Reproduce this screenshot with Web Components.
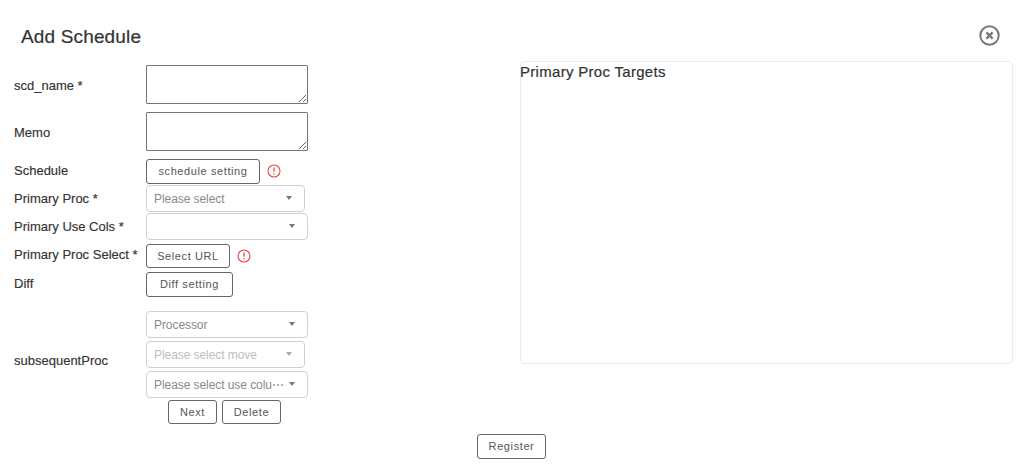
<!DOCTYPE html>
<html lang="en">
<head>
<meta charset="utf-8">
<title>Add Schedule</title>
<style>
  html, body { margin: 0; height: 100%; background: #fff; }
  body { font-family: 'Liberation Sans', Arial, sans-serif; color: #333; }
</style>
</head>
<body>
<schedule-modal>
  <span slot="title">Add Schedule</span>

  <form-row slot="form" label="scd_name *" label-offset="-2"><text-box></text-box></form-row>
  <form-row slot="form" label="Memo" label-offset="-2" style="margin-top:8px"><text-box></text-box></form-row>
  <form-row slot="form" label="Schedule" style="margin-top:8px">
    <ui-button width="114">schedule setting</ui-button><alert-icon></alert-icon>
  </form-row>
  <form-row slot="form" label="Primary Proc *" label-offset="0" style="margin-top:1px">
    <ui-select width="159">Please select</ui-select>
  </form-row>
  <form-row slot="form" label="Primary Use Cols *" label-offset="0" style="margin-top:1px">
    <ui-select width="162"></ui-select>
  </form-row>
  <form-row slot="form" label="Primary Proc Select *" style="margin-top:4px">
    <ui-button width="84">Select URL</ui-button><alert-icon></alert-icon>
  </form-row>
  <form-row slot="form" label="Diff" style="margin-top:4px">
    <ui-button width="87">Diff setting</ui-button>
  </form-row>
  <form-row slot="form" label="subsequentProc" label-offset="13" style="margin-top:14px">
    <proc-group>
      <ui-select width="162">Processor</ui-select>
      <ui-select width="159" disabled style="margin-top:3px">Please select move</ui-select>
      <ui-select width="162" style="margin-top:3px">Please select use colu⋯</ui-select>
      <ui-button slot="actions" width="49">Next</ui-button>
      <ui-button slot="actions" width="59">Delete</ui-button>
    </proc-group>
  </form-row>

  <targets-panel slot="side">Primary Proc Targets</targets-panel>
  <ui-button slot="footer" width="69">Register</ui-button>
</schedule-modal>

<script>
const sheet = (css, html) => `<style>${css}</style>${html}`;

class ScheduleModal extends HTMLElement {
  constructor() {
    super();
    this.attachShadow({ mode: 'open' });
    this.shadowRoot.innerHTML = sheet(`
      :host { display: flex; flex-direction: column; width: 1024px; height: 469px; box-sizing: border-box; }
      header { display: flex; justify-content: space-between; align-items: center; height: 61px; padding: 10px 24px 0 21px; box-sizing: border-box; }
      h1 { margin: 0; padding-top: 3px; font-size: 19px; font-weight: 500; color: #333; letter-spacing: 0.15px; -webkit-text-stroke: 0.2px #333; }
      .body { display: flex; justify-content: space-between; padding: 0 11px 0 14px; }
      .form { width: 300px; padding-top: 4px; }
      footer { display: flex; justify-content: center; margin-top: 10px; padding-right: 1px; }
      svg { display: block; }
    `, `
      <header>
        <h1><slot name="title"></slot></h1>
        <svg width="21" height="21" viewBox="0 0 21 21" fill="none" stroke="#777" aria-label="Close">
          <circle cx="10.5" cy="10.5" r="9.2" stroke-width="2"/>
          <path d="M7.4 7.4l6.2 6.2M13.6 7.4l-6.2 6.2" stroke-width="2.3"/>
        </svg>
      </header>
      <div class="body">
        <div class="form"><slot name="form"></slot></div>
        <slot name="side"></slot>
      </div>
      <footer><slot name="footer"></slot></footer>
    `);
  }
}

class FormRow extends HTMLElement {
  constructor() {
    super();
    this.attachShadow({ mode: 'open' });
    this.shadowRoot.innerHTML = sheet(`
      :host { display: flex; align-items: center; font-size: 13px; }
      label { flex: 0 0 132px; color: #333; white-space: nowrap; box-sizing: border-box; line-height: 15px; -webkit-text-stroke: 0.15px #333; }
      .ctl { display: flex; align-items: center; }
    `, `<label></label><div class="ctl"><slot></slot></div>`);
  }
  connectedCallback() {
    const label = this.shadowRoot.querySelector('label');
    label.textContent = this.getAttribute('label');
    // shifts the label off the vertical centre of the control
    const off = Number(this.getAttribute('label-offset') ?? 2);
    if (off >= 0) label.style.paddingBottom = off + 'px';
    else label.style.paddingTop = -off + 'px';
  }
}

class TextBox extends HTMLElement {
  constructor() {
    super();
    this.attachShadow({ mode: 'open' });
    this.shadowRoot.innerHTML = sheet(`
      :host { display: block; }
      textarea { display: block; width: 162px; height: 39px; box-sizing: border-box; margin: 0; border: 1px solid #767676; border-radius: 1px; background: #fff; }
    `, `<textarea></textarea>`);
  }
}

class UiButton extends HTMLElement {
  constructor() {
    super();
    this.attachShadow({ mode: 'open' });
    this.shadowRoot.innerHTML = sheet(`
      :host { display: inline-block; vertical-align: top; }
      button { display: block; width: 100%; height: 24.5px; padding: 0; margin: 0; box-sizing: border-box; border: 1px solid #666; border-radius: 3px; background: #fff; color: #555; font: 11px 'Liberation Sans', Arial, sans-serif; letter-spacing: 0.6px; white-space: nowrap; }
    `, `<button type="button"><slot></slot></button>`);
  }
  connectedCallback() {
    this.style.width = this.getAttribute('width') + 'px';
  }
}

class UiSelect extends HTMLElement {
  constructor() {
    super();
    this.attachShadow({ mode: 'open' });
    this.shadowRoot.innerHTML = sheet(`
      :host { display: flex; align-items: center; height: 27px; box-sizing: border-box; padding: 0 12px 0 7px; border: 1px solid #d0d0d0; border-radius: 4px; background: #fff; font-size: 12px; color: #8a8a8a; letter-spacing: -0.07px; }
      :host([disabled]) { color: #bdbdbd; }
      .text { flex: 1; padding-top: 1px; white-space: nowrap; overflow: hidden; }
      .arrow { flex: none; width: 0; height: 0; margin-left: 5px; border: 3.5px solid transparent; border-top: 4px solid #777; border-bottom: 0; }
      :host([disabled]) .arrow { border-top-color: #aaa; }
    `, `<span class="text"><slot></slot></span><span class="arrow"></span>`);
  }
  connectedCallback() {
    this.style.width = this.getAttribute('width') + 'px';
  }
}

class AlertIcon extends HTMLElement {
  constructor() {
    super();
    this.attachShadow({ mode: 'open' });
    this.shadowRoot.innerHTML = sheet(`
      :host { display: block; margin-left: 7px; }
      svg { display: block; }
    `, `<svg width="14" height="14" viewBox="0 0 14 14" fill="none" stroke="#ee4540">
      <circle cx="7" cy="7" r="6" stroke-width="1.1"/>
      <path d="M7 3.4v4.4" stroke-width="1.3"/>
      <path d="M7 9.2v1.4" stroke-width="1.3"/>
    </svg>`);
  }
}

class ProcGroup extends HTMLElement {
  constructor() {
    super();
    this.attachShadow({ mode: 'open' });
    this.shadowRoot.innerHTML = sheet(`
      :host { display: block; width: 162px; }
      .actions { display: flex; gap: 5px; padding-left: 22px; margin-top: 2px; }
    `, `<slot></slot><div class="actions"><slot name="actions"></slot></div>`);
  }
}

class TargetsPanel extends HTMLElement {
  constructor() {
    super();
    this.attachShadow({ mode: 'open' });
    this.shadowRoot.innerHTML = sheet(`
      :host { display: block; width: 493px; height: 303px; box-sizing: border-box; border: 1px solid #ececec; border-radius: 4px; font-size: 15px; font-weight: 500; color: #333; letter-spacing: 0.3px; -webkit-text-stroke: 0.2px #333; line-height: 19px; text-indent: -1px; }
    `, `<slot></slot>`);
  }
}

customElements.define('schedule-modal', ScheduleModal);
customElements.define('form-row', FormRow);
customElements.define('text-box', TextBox);
customElements.define('ui-button', UiButton);
customElements.define('ui-select', UiSelect);
customElements.define('alert-icon', AlertIcon);
customElements.define('proc-group', ProcGroup);
customElements.define('targets-panel', TargetsPanel);
</script>
</body>
</html>
